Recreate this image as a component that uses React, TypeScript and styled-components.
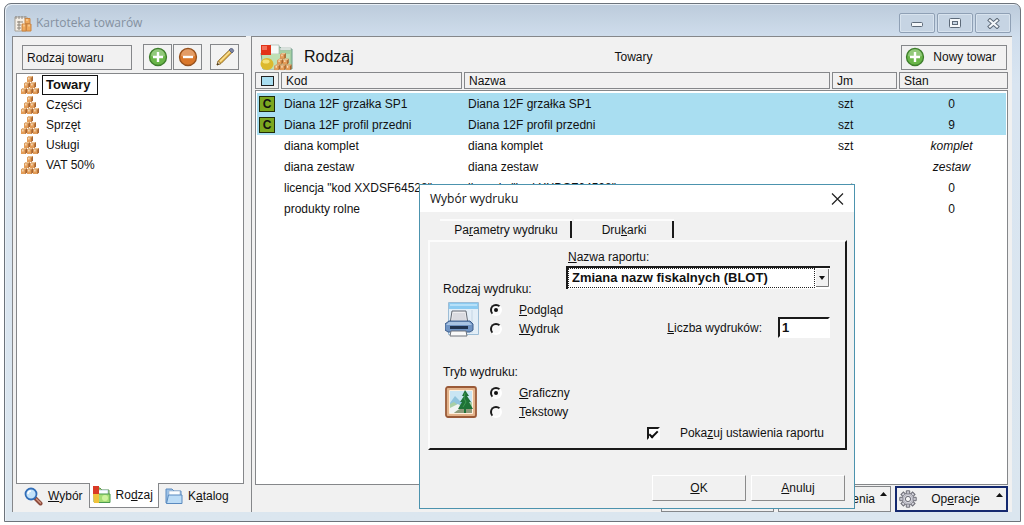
import React from "react";
import styled, { createGlobalStyle, css } from "styled-components";

const GlobalStyle = createGlobalStyle`
  *, *::before, *::after { box-sizing: border-box; }
  body {
    margin: 0;
    background: #fff;
    color: #111;
    font-family: "Liberation Sans", Arial, sans-serif;
    font-size: 12px;
    line-height: 16px;
  }
  button, input, select { font: inherit; color: inherit; margin: 0; }
  ul { list-style: none; margin: 0; padding: 0; }
  svg { display: block; flex: none; }
`;

const edge = "#85878a";

/* ---------- main window ---------- */

const Page = styled.div`
  display: flex;
  min-height: 100vh;
  padding: 3px 3px 3px 4px;
`;

const Window = styled.main`
  flex: 1;
  display: flex;
  flex-direction: column;
  padding: 0 8px 9px 7px;
  border: 1px solid #6c737b;
  border-radius: 7px 7px 0 0;
  background: linear-gradient(#bccbdb, #d0deed 34px, #d9e5f1 80px, #dbe6ef);
  box-shadow: inset 1px 1px 0 #e9f0f7;
`;

const TitleBar = styled.header`
  display: flex;
  align-items: center;
  height: 32px;
  gap: 4px;
  padding: 6px 1px 0 2px;
`;

const WindowTitle = styled.h1`
  flex: 1;
  margin: 0;
  font: 400 12px/18px "Open Sans", "Noto Sans", sans-serif;
  color: #8490a0;
`;

const WindowButtons = styled.div`
  display: flex;
  gap: 2px;
`;

const WindowButton = styled.button`
  display: grid;
  place-items: center;
  width: 36px;
  height: 20px;
  padding: 0;
  border: 1px solid #8fa0b5;
  border-radius: 2px;
  background: #c6d4e3;
  box-shadow: inset 0 0 0 1px #d8e3ee;
`;

const Client = styled.div`
  flex: 1;
  display: grid;
  grid-template-columns: 234px minmax(0, 1fr);
  gap: 5px;
  background: #f1f1f1;
`;

const Pane = styled.section<{ $side?: "left" | "right" }>`
  display: flex;
  flex-direction: column;
  min-width: 0;
  border: solid ${edge};
  border-width: 1px 0 0 1px;
  padding: ${(p) => (p.$side === "left" ? "7px 2px 3px 3px" : "5px 4px 0 3px")};
`;

const PaneHeader = styled.div`
  display: flex;
  align-items: center;
  padding: 0 5px 3px 6px;
`;

const KindBox = styled.div`
  width: 110px;
  height: 25px;
  padding: 4px;
  margin-right: 11px;
  border: 1px solid ${edge};
`;

const IconButton = styled.button<{ $gap?: number }>`
  display: grid;
  place-items: center;
  width: 29px;
  height: 26px;
  margin-right: ${(p) => p.$gap ?? 0}px;
  padding: 0;
  border: 1px solid ${edge};
  background: #f3f3f3;
`;

const KindList = styled.ul`
  flex: 1;
  padding: 1px 4px;
  border: 1px solid ${edge};
  background: #fff;
`;

const KindItem = styled.li`
  display: flex;
  align-items: center;
  gap: 3px;
  height: 20px;
`;

const KindButton = styled.button<{ $active?: boolean }>`
  height: 20px;
  padding: 0 4px 0 3px;
  border: 1px solid transparent;
  background: none;
  ${(p) =>
    p.$active &&
    css`
      padding-right: 6px;
      border-color: #111;
      font-weight: 700;
      font-size: 13px;
    `}
`;

const TabStrip = styled.nav`
  display: flex;
  height: 25px;
  padding-left: 6px;
`;

const Tab = styled.button<{ $active?: boolean }>`
  display: flex;
  align-items: center;
  gap: 5px;
  height: 25px;
  padding: 0 5px 0 1px;
  border: 1px solid transparent;
  border-top: 0;
  background: none;
  white-space: nowrap;
  ${(p) =>
    p.$active &&
    css`
      margin-top: -1px;
      margin-right: 4px;
      padding-left: 3px;
      border-color: ${edge};
      background: #fff;
    `}
`;

const CatalogHeader = styled.div`
  display: grid;
  grid-template-columns: 1fr auto 1fr;
  align-items: center;
  height: 30px;
  padding: 0 1px 0 5px;
`;

const CatalogTitle = styled.div`
  display: flex;
  align-items: center;
  gap: 11px;
  font-size: 16px;
  line-height: 22px;
`;

const NewButton = styled.button`
  display: flex;
  align-items: center;
  justify-self: end;
  justify-content: space-between;
  width: 106px;
  height: 25px;
  padding: 0 10px 0 3px;
  border: 1px solid ${edge};
  background: #f1f1f1;
`;

/* ---------- goods table ---------- */

const Table = styled.table`
  flex: 1;
  display: flex;
  flex-direction: column;
`;

const Head = styled.thead`
  display: block;
`;

const HeadRow = styled.tr`
  display: grid;
  grid-template-columns: 24px 181px minmax(0, 1fr) 65px 109px;
  gap: 2px;
`;

const HeadCell = styled.th`
  display: flex;
  align-items: center;
  height: 17px;
  padding: 0 4px;
  border: 1px solid ${edge};
  font-weight: 400;
`;

const Body = styled.tbody`
  flex: 1;
  display: block;
  margin-top: 1px;
  padding: 2px 1px;
  border: 1px solid ${edge};
  background: #fff;
`;

const Row = styled.tr<{ $marked?: boolean }>`
  display: grid;
  grid-template-columns: 27px 184px minmax(0, 1fr) 59px 109px;
  align-items: center;
  height: 21px;
  background: ${(p) => (p.$marked ? "#a9def1" : "none")};
`;

const Cell = styled.td<{ $center?: boolean; $italic?: boolean }>`
  padding: 0;
  white-space: nowrap;
  text-align: ${(p) => (p.$center ? "center" : "left")};
  font-style: ${(p) => (p.$italic ? "italic" : "normal")};
`;

const Mark = styled.span`
  display: grid;
  place-items: center;
  width: 16px;
  height: 16px;
  margin-left: 2px;
  border: 1px solid #1f2b0a;
  background: #7ba71f;
  font-size: 12px;
  line-height: 14px;
  font-weight: 900;
`;

const Swatch = styled.span`
  width: 14px;
  height: 10px;
  margin-left: 1px;
  border: 1px solid #222;
  background: #a9def1;
`;

const Actions = styled.div`
  display: flex;
  justify-content: flex-end;
  gap: 4px;
  padding-top: 1px;
`;

const ActionButton = styled.button<{ $default?: boolean }>`
  position: relative;
  display: flex;
  align-items: center;
  justify-content: flex-end;
  gap: 14px;
  width: 113px;
  height: 26px;
  padding: 0 15px 0 0;
  border: 1px solid ${edge};
  background: #f1f1f1;
  ${(p) =>
    p.$default &&
    css`
      padding-right: 26px;
      border: 2px solid #14296f;
    `}
`;

const ActionArrow = styled.svg`
  position: absolute;
  top: 5px;
  right: 3px;
`;

/* ---------- print dialog ---------- */

const Dialog = styled.form`
  position: absolute;
  left: 419px;
  top: 184px;
  width: 436px;
  padding-bottom: 7px;
  border: 1px solid #4c93ae;
  background: #f1f1f1;
`;

const DialogTitle = styled.header`
  display: flex;
  align-items: center;
  justify-content: space-between;
  height: 27px;
  padding: 0 10px;
  background: #fff;
`;

const DialogHeading = styled.h2`
  margin: 0;
  font: 400 12px/18px "Open Sans", "Noto Sans", sans-serif;
`;

const CloseButton = styled.button`
  display: grid;
  place-items: center;
  padding: 0;
  border: 0;
  background: none;
`;

const DialogTabs = styled.div`
  display: flex;
  gap: 2px;
  padding: 7px 0 0 20px;
`;

const DialogTab = styled.button<{ $wide?: boolean }>`
  position: relative;
  width: ${(p) => (p.$wide ? 132 : 100)}px;
  height: 21px;
  padding: 0 0 2px;
  border: 0;
  border-top: 2px solid #fcfcfc;
  background: none;

  &::after {
    content: "";
    position: absolute;
    right: 0;
    top: 0;
    width: 2px;
    height: 17px;
    background: #1a1a1a;
  }
`;

const Sheet = styled.div`
  display: grid;
  grid-template-columns: 123px 1fr;
  height: 210px;
  margin: 0 7px 0 8px;
  padding: 7px 15px 7px 13px;
  border: 2px solid #1a1a1a;
  border-top-color: #fcfcfc;
  border-left-color: #fcfcfc;
`;

const Options = styled.div`
  display: flex;
  flex-direction: column;
  gap: 26px;
  padding-top: 32px;
`;

const Group = styled.fieldset`
  display: grid;
  grid-template-columns: 36px 1fr;
  column-gap: 9px;
  align-items: center;
  min-width: 0;
  margin: 0;
  padding: 3px 0 0 2px;
  border: 0;
`;

const Legend = styled.legend`
  margin-left: -2px;
  padding: 0;
`;

const Choice = styled.label`
  display: flex;
  align-items: center;
  gap: 17px;
  height: 19px;
`;

const Radio = styled.input.attrs({ type: "radio" })`
  appearance: none;
  display: grid;
  place-items: center;
  flex: none;
  width: 12px;
  height: 12px;
  border: 2px solid #1a1a1a;
  border-right-color: #fff;
  border-bottom-color: #fff;
  border-radius: 50%;
  background: #f8f8f8;

  &:checked::after {
    content: "";
    width: 4px;
    height: 4px;
    border-radius: 50%;
    background: #111;
  }
`;

const Fields = styled.div`
  display: flex;
  flex-direction: column;
`;

const FieldLabel = styled.label`
  padding: 0 2px;
`;

const SelectFrame = styled.div`
  position: relative;
  height: 23px;
  margin-top: 1px;
  border: 2px solid #1a1a1a;
  border-right: 0;
  border-bottom: 0;
  background: #fff;
`;

const Select = styled.select`
  appearance: none;
  width: calc(100% - 15px);
  height: 20px;
  padding: 0 3px;
  border: 1px dotted #222;
  border-radius: 0;
  background: #fff;
  font-weight: 700;
  font-size: 13px;
  line-height: 16px;
`;

const SelectArrow = styled.svg`
  position: absolute;
  right: 1px;
  top: 0;
  pointer-events: none;
`;

const CountRow = styled.div`
  display: flex;
  align-items: center;
  justify-content: flex-end;
  gap: 16px;
  margin-top: 28px;
`;

const CountInput = styled.input`
  width: 52px;
  height: 21px;
  padding: 0 2px;
  border: 2px solid #1a1a1a;
  border-right-color: #fff;
  border-bottom-color: #fff;
  border-radius: 0;
  background: #fff;
  font-weight: 700;
  font-size: 13px;
`;

const CheckRow = styled.label`
  display: flex;
  align-items: center;
  justify-content: flex-end;
  gap: 20px;
  margin-top: auto;
  padding-right: 6px;
`;

const Checkbox = styled.input.attrs({ type: "checkbox" })`
  appearance: none;
  display: grid;
  place-items: center;
  width: 13px;
  height: 13px;
  border: 2px solid #1a1a1a;
  border-right-color: #fff;
  border-bottom-color: #fff;
  background: #fff;

  &:checked::after {
    content: "";
    width: 9px;
    height: 5px;
    border: 2px solid #111;
    border-top: 0;
    border-right: 0;
    transform: rotate(-45deg);
  }
`;

const DialogActions = styled.div`
  display: flex;
  justify-content: flex-end;
  gap: 5px;
  padding: 25px 9px 0 0;
`;

const DialogButton = styled.button`
  width: 94px;
  height: 26px;
  padding: 0;
  border: 1px solid #8b8b8b;
  border-top-color: #fff;
  border-left-color: #fff;
  background: #f1f1f1;
`;

/* ---------- icons ---------- */

const Crate = ({ x, y }: { x: number; y: number }) => (
  <g transform={`translate(${x} ${y})`}>
    <path d="M0 1.500 2 0h4v4.500L4.500 6H0z" fill="#a9652f" />
    <path d="M0 1.500h4.300V6H0z" fill="#e29c58" />
    <path d="M1.200 1.500h1.300v2H1.200z" fill="#fbe3c4" />
    <path d="M0 1.500 2 0h4L4.500 1.500z" fill="#f0c38e" />
  </g>
);

const Pyramid = () => (
  <>
    <Crate x={6} y={0} />
    <Crate x={3} y={6} />
    <Crate x={9} y={6} />
    <Crate x={0} y={12} />
    <Crate x={6} y={12} />
    <Crate x={12} y={12} />
  </>
);

const Crates = () => (
  <svg width="18" height="18" viewBox="0 0 18 18" aria-hidden="true">
    <Pyramid />
  </svg>
);

const Round = ({ minus }: { minus?: boolean }) => (
  <svg width="20" height="20" viewBox="0 0 20 20" aria-hidden="true">
    <circle cx="10" cy="10" r="8.500" fill={minus ? "#d9772b" : "#69b548"} stroke={minus ? "#96501d" : "#3d7d2b"} strokeWidth="1.300" />
    <path d="M3 9a7 7 0 0 1 14 0q-7 3-14 0z" fill="#fff" opacity=".28" />
    <path d={minus ? "M5 10h10" : "M5 10h10M10 5v10"} stroke="#fff" strokeWidth="2.400" />
  </svg>
);

const Pencil = () => (
  <svg width="20" height="20" viewBox="0 0 20 20" aria-hidden="true">
    <path d="M2 18l1.200-4L14.500 3l2.500 2.500L6 16.500z" fill="#e9b948" stroke="#8d6a2a" />
    <path d="M5 14.500 15 4.500" stroke="#f9e29a" strokeWidth="1.200" />
    <path d="M14 3l1.300-1.300q1.600-.6 2.700.6t.4 2.200L17 6z" fill="#7d86a4" stroke="#5c6480" />
    <path d="M2 18l1.200-4L6 16.500z" fill="#f2dbb5" stroke="#8d6a2a" strokeWidth=".7" />
    <path d="M2 18l.6-2 1.500 1.300z" fill="#222" />
  </svg>
);

const AppIcon = () => (
  <svg width="18" height="17" viewBox="0 0 18 17" aria-hidden="true">
    <path d="M1 2h12v14H1z" fill="#f5efe6" stroke="#a7a195" />
    <path d="M2 1v3M5 1v3M8 1v3M11 1v3" stroke="#888" />
    <path d="M3 7h6M3 10h4M3 13h4M5 6v9" stroke="#8a8378" />
    <path d="M11 3.500h5v5h-5zM8 9h4v7H8zM12.500 9H17v7h-4.500z" fill="#efa95c" stroke="#c98443" />
    <path d="M13 4v2M10 9.500v2M15 9.500v2" stroke="#ffe2b5" />
  </svg>
);

const KindFolder = () => (
  <svg width="33" height="27" viewBox="0 0 33 27" aria-hidden="true">
    <path d="M10 3h10l2 2h10v20H3L1 9z" fill="#a5cfa2" stroke="#6b9c8b" />
    <path d="M10 1h9v9h-9zM20 4h11v2H20z" fill="#f6f9f7" stroke="#a3b7ad" strokeWidth=".7" />
    <path d="M2 10h28l-1 15H3z" fill="#bfe0b4" />
    <path d="M1 1h10v10H1z" fill="#e23318" />
    <path d="M2 2h5v4H2z" fill="#f3705a" />
    <g transform="translate(14.500 9) scale(.95)">
      <Pyramid />
    </g>
    <ellipse cx="7" cy="20" rx="6.500" ry="6" fill="#dcb92d" />
    <ellipse cx="6" cy="17.500" rx="3.500" ry="2" fill="#f5e27a" />
  </svg>
);

const Magnifier = () => (
  <svg width="19" height="19" viewBox="0 0 19 19" aria-hidden="true">
    <path d="M11.500 11.500l5 5" stroke="#8c4a3c" strokeWidth="4" strokeLinecap="round" />
    <path d="M12.500 12l4 4" stroke="#d69a86" strokeWidth="1.300" strokeLinecap="round" />
    <circle cx="7" cy="7" r="5.500" fill="#c4e3fa" stroke="#326eb8" strokeWidth="1.800" />
    <path d="M4 7q0-3 3-3" stroke="#fff" strokeWidth="1.500" fill="none" />
  </svg>
);

const Folder = ({ kind }: { kind?: boolean }) => (
  <svg width="18" height="18" viewBox="0 0 18 18" aria-hidden="true">
    <path d="M1 2h6l2 2h7v12H1z" fill={kind ? "#94cc62" : "#9cc1e6"} stroke={kind ? "#5a9a45" : "#5a8abf"} />
    <path d="M4 4h11v5H4z" fill="#fafdff" stroke="#9ab4cc" strokeWidth=".6" />
    <path d="M1.500 16.500 3.500 8H17v8.500z" fill={kind ? "#a4dd74" : "#bcdcf6"} stroke={kind ? "#4b9a50" : "#5a8abf"} />
    {kind && (
      <>
        <path d="M0 0h6v8H0z" fill="#d93a25" />
        <path d="M0 8h6v9H1z" fill="#f0c23b" />
        <circle cx="12" cy="12" r="3" fill="#cff29e" />
      </>
    )}
  </svg>
);

const Gear = () => (
  <svg width="18" height="18" viewBox="0 0 18 18" aria-hidden="true">
    {[0, 45, 90, 135].map((angle) => (
      <path key={angle} d="M7.300.8h3.400v16.400H7.300z" transform={`rotate(${angle} 9 9)`} fill="#d2d2da" stroke="#6c6c76" />
    ))}
    <circle cx="9" cy="9" r="5.800" fill="#d2d2da" stroke="#6c6c76" strokeWidth=".6" />
    <circle cx="9" cy="9" r="4.600" fill="none" stroke="#a4a4ae" strokeWidth=".8" />
    <circle cx="9" cy="9" r="2.600" fill="#f6f6f6" stroke="#6c6c76" />
  </svg>
);

const PrinterPreview = () => (
  <svg width="36" height="36" viewBox="0 0 36 36" aria-hidden="true">
    <path d="M3.500 1.500h30v32h-30z" fill="#e3eef7" stroke="#9dbdd6" />
    <path d="M4 2h29v6H4z" fill="#8ccbf1" />
    <path d="M5 3h27v2H5z" fill="#b7e0f8" />
    <path d="M27 9v23" stroke="#c4d5e4" />
    <path d="M7 10h14l2 13H5z" fill="#efeff1" stroke="#636972" />
    <path d="M8 12h12l1 7H7z" fill="#dadbe0" />
    <path d="M4 20h21l3 3v6l-3 2H3l-3-2v-6z" fill="#7094c3" stroke="#3d5d8a" />
    <path d="M4 21h20l3 3H1z" fill="#a9c4e3" />
    <path d="M5 25h18v3H5z" fill="#20334f" />
    <path d="M6 30h15l1 5H5z" fill="#fafafa" stroke="#70757d" />
  </svg>
);

const Picture = () => (
  <svg width="32" height="32" viewBox="0 0 32 32" aria-hidden="true">
    <rect x="1" y="1" width="30" height="30" rx="2" fill="#e3b48c" stroke="#9a5a38" strokeWidth="1.800" />
    <path d="M4.500 4.500h23v23h-23z" fill="#c9e5f3" stroke="#fff0de" />
    <path d="M5 17l5-7 6 6 4-4 7 5v10H5z" fill="#8fc3dc" />
    <path d="M5 18l4-2 4 3 14-3v11H5z" fill="#a8cfa5" />
    <path d="M5 27V22l8-4 4 3-8 6z" fill="#f1f4f2" />
    <path d="M9 27q6-6 18-5v5z" fill="#8f9b7c" />
    <path d="M20 4l4 6h-2l4 6h-2l4 7h-7v4h-2v-4h-6l4-7h-2l4-6h-2z" fill="#1f7238" />
    <path d="M20 7l-1 5 2 4-3 5" stroke="#3d9c52" fill="none" />
  </svg>
);

const Arrow = () => (
  <ActionArrow width="7" height="4" viewBox="0 0 7 4" aria-hidden="true">
    <path d="M0 4 3.500 0 7 4z" fill="#111" />
  </ActionArrow>
);

/* ---------- data ---------- */

const kinds = ["Towary", "Części", "Sprzęt", "Usługi", "VAT 50%"];

type Goods = { name: string; unit?: string; stock: string; marked?: boolean };

const goods: Goods[] = [
  { name: "Diana 12F grzałka SP1", unit: "szt", stock: "0", marked: true },
  { name: "Diana 12F profil przedni", unit: "szt", stock: "9", marked: true },
  { name: "diana komplet", unit: "szt", stock: "komplet" },
  { name: "diana zestaw", stock: "zestaw" },
  { name: 'licencja "kod XXDSF64528"', unit: "szt", stock: "0" },
  { name: "produkty rolne", stock: "0" },
];

export default function App() {
  return (
    <>
      <GlobalStyle />
      <Page>
        <Window>
          <TitleBar>
            <AppIcon />
            <WindowTitle>Kartoteka towarów</WindowTitle>
            <WindowButtons>
              <WindowButton aria-label="Minimalizuj">
                <svg width="14" height="12" viewBox="0 0 14 12">
                  <rect x="1.500" y="5.500" width="11" height="4" rx="1" fill="#f4f7fa" stroke="#5d6a79" />
                </svg>
              </WindowButton>
              <WindowButton aria-label="Maksymalizuj">
                <svg width="12" height="10" viewBox="0 0 12 10">
                  <rect x=".5" y=".5" width="11" height="9" rx="1" fill="#f4f7fa" stroke="#5d6a79" />
                  <rect x="3.500" y="3.500" width="5" height="3" fill="#c6d4e3" stroke="#5d6a79" />
                </svg>
              </WindowButton>
              <WindowButton aria-label="Zamknij">
                <svg width="13" height="11" viewBox="0 0 13 11">
                  <path d="M1.500 1l10 9M11.500 1l-10 9" stroke="#5d6a79" strokeWidth="4" />
                  <path d="M2.200 1.700l8.600 7.600M10.800 1.700l-8.600 7.600" stroke="#f4f7fa" strokeWidth="2.200" />
                </svg>
              </WindowButton>
            </WindowButtons>
          </TitleBar>

          <Client>
            <Pane $side="left">
              <PaneHeader>
                <KindBox>Rodzaj towaru</KindBox>
                <IconButton $gap={1} aria-label="Dodaj"><Round /></IconButton>
                <IconButton $gap={8} aria-label="Usuń"><Round minus /></IconButton>
                <IconButton aria-label="Edytuj"><Pencil /></IconButton>
              </PaneHeader>
              <KindList>
                {kinds.map((kind, i) => (
                  <KindItem key={kind}>
                    <Crates />
                    <KindButton $active={i === 0}>{kind}</KindButton>
                  </KindItem>
                ))}
              </KindList>
              <TabStrip>
                <Tab><Magnifier /><span><u>W</u>ybór</span></Tab>
                <Tab $active><Folder kind /><span>Ro<u>d</u>zaj</span></Tab>
                <Tab><Folder /><span>K<u>a</u>talog</span></Tab>
              </TabStrip>
            </Pane>

            <Pane $side="right">
              <CatalogHeader>
                <CatalogTitle><KindFolder />Rodzaj</CatalogTitle>
                <span>Towary</span>
                <NewButton><Round />Nowy towar</NewButton>
              </CatalogHeader>
              <Table>
                <Head>
                  <HeadRow>
                    <HeadCell aria-label="Znacznik"><Swatch /></HeadCell>
                    <HeadCell>Kod</HeadCell>
                    <HeadCell>Nazwa</HeadCell>
                    <HeadCell>Jm</HeadCell>
                    <HeadCell>Stan</HeadCell>
                  </HeadRow>
                </Head>
                <Body>
                  {goods.map((g) => (
                    <Row key={g.name} $marked={g.marked}>
                      <Cell>{g.marked && <Mark>C</Mark>}</Cell>
                      <Cell>{g.name}</Cell>
                      <Cell>{g.name}</Cell>
                      <Cell>{g.unit}</Cell>
                      <Cell $center $italic={/[a-z]/.test(g.stock)}>{g.stock}</Cell>
                    </Row>
                  ))}
                </Body>
              </Table>
              <Actions>
                <ActionButton aria-label="Wydruki"><Arrow /></ActionButton>
                <ActionButton>Zestawienia<Arrow /></ActionButton>
                <ActionButton $default><Gear /><span>Op<u>e</u>racje</span><Arrow /></ActionButton>
              </Actions>
            </Pane>
          </Client>
        </Window>
      </Page>

      <Dialog role="dialog" aria-labelledby="dialog-title" onSubmit={(e) => e.preventDefault()}>
        <DialogTitle>
          <DialogHeading id="dialog-title">Wybór wydruku</DialogHeading>
          <CloseButton type="button" aria-label="Zamknij okno">
            <svg width="13" height="12" viewBox="0 0 13 12">
              <path d="M1 .5l11 11M12 .5l-11 11" stroke="#222" strokeWidth="1.200" />
            </svg>
          </CloseButton>
        </DialogTitle>
        <DialogTabs role="tablist">
          <DialogTab $wide type="button" role="tab" aria-selected="true">Pa<u>r</u>ametry wydruku</DialogTab>
          <DialogTab type="button" role="tab" aria-selected="false">Dru<u>k</u>arki</DialogTab>
        </DialogTabs>
        <Sheet>
          <Options>
            <Group>
              <Legend>Rodzaj wydruku:</Legend>
              <PrinterPreview />
              <div>
                <Choice><Radio name="output" defaultChecked /><span><u>P</u>odgląd</span></Choice>
                <Choice><Radio name="output" /><span><u>W</u>ydruk</span></Choice>
              </div>
            </Group>
            <Group>
              <Legend>Tryb wydruku:</Legend>
              <Picture />
              <div>
                <Choice><Radio name="mode" defaultChecked /><span><u>G</u>raficzny</span></Choice>
                <Choice><Radio name="mode" /><span><u>T</u>ekstowy</span></Choice>
              </div>
            </Group>
          </Options>
          <Fields>
            <FieldLabel htmlFor="report"><u>N</u>azwa raportu:</FieldLabel>
            <SelectFrame>
              <Select id="report">
                <option>Zmiana nazw fiskalnych (BLOT)</option>
              </Select>
              <SelectArrow width="14" height="19" viewBox="0 0 14 19" aria-hidden="true">
                <path d="M1 1h12v17H1z" fill="#f1f1f1" />
                <path d="M13.500 1v17.500H1" fill="none" stroke="#777" />
                <path d="M4 8h6L7 12z" fill="#111" />
              </SelectArrow>
            </SelectFrame>
            <CountRow>
              <label htmlFor="copies"><u>L</u>iczba wydruków:</label>
              <CountInput id="copies" defaultValue="1" />
            </CountRow>
            <CheckRow>
              <Checkbox defaultChecked />
              <span>Poka<u>z</u>uj ustawienia raportu</span>
            </CheckRow>
          </Fields>
        </Sheet>
        <DialogActions>
          <DialogButton type="submit"><u>O</u>K</DialogButton>
          <DialogButton type="button"><u>A</u>nuluj</DialogButton>
        </DialogActions>
      </Dialog>
    </>
  );
}
